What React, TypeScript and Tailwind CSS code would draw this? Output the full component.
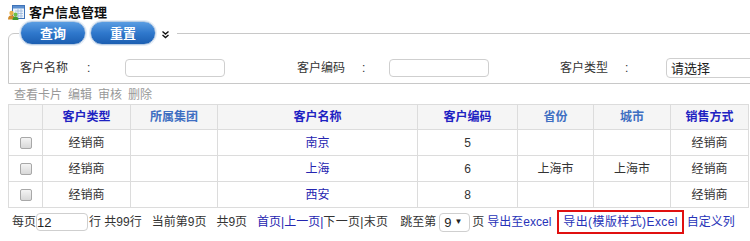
import React from 'react';

const font = { fontFamily: '"Microsoft YaHei", "Liberation Sans", "Noto Sans CJK SC", sans-serif' };

const columns = [
   { title: '客户类型', w: 'w-[88px]', dark: true },
   { title: '所属集团', w: 'w-[87px]', dark: false },
   { title: '客户名称', w: 'w-[200px]', dark: true },
   { title: '客户编码', w: 'w-[100px]', dark: true },
   { title: '省份', w: 'w-[76px]', dark: false },
   { title: '城市', w: 'w-[77px]', dark: false },
   { title: '销售方式', w: 'w-[78px]', dark: true },
];

const rows = [
   { type: '经销商', group: '', name: '南京', code: '5', prov: '', city: '', sale: '经销商' },
   { type: '经销商', group: '', name: '上海', code: '6', prov: '上海市', city: '上海市', sale: '经销商' },
   { type: '经销商', group: '', name: '西安', code: '8', prov: '', city: '', sale: '经销商' },
];

function TitleIcon() {
   return (
      <svg width="17" height="15" viewBox="0 0 17 15">
         <rect x="4.5" y="0.5" width="12" height="13" fill="#eef4fb" stroke="#3f73b8" />
         <rect x="5" y="1" width="11" height="2.5" fill="#5b8fd0" />
         <path d="M7 6h8M7 8.5h8M7 11h8M10 4v9M13 4v9" stroke="#9ab6dc" strokeWidth="0.8" />
         <circle cx="3.5" cy="8" r="2.2" fill="#e8b04a" />
         <path d="M0 14.5c0-3 1.5-4.2 3.5-4.2s3.5 1.2 3.5 4.2z" fill="#d08a2a" />
         <circle cx="7.5" cy="9.5" r="2" fill="#6fbf4a" />
         <path d="M4.5 15c0-2.6 1.3-3.6 3-3.6s3 1 3 3.6z" fill="#3f9a2e" />
      </svg>
   );
}

function PillButton({ label }: { label: string }) {
   return (
      <button className="h-[24px] w-[66px] rounded-full border border-[#b9cde4] bg-gradient-to-b from-[#5a9de2] via-[#2f78cc] to-[#1c5fb2] text-white text-[13px] font-bold leading-none shadow-[0_0_0_1px_#e6eef7]">
         {label}
      </button>
   );
}

function Checkbox() {
   return <span className="inline-block w-[12px] h-[12px] rounded-[2px] border border-[#a8a8a8] bg-gradient-to-b from-[#f4f4f4] to-[#d8d8d8] align-middle" />;
}

export default function App() {
   return (
      <div className="w-[750px] h-[241px] bg-white text-[12px] text-[#333] overflow-hidden" style={font}>
         <div className="flex items-center h-[22px] pl-[8px] pt-[3px] gap-[4px]">
            <TitleIcon />
            <span className="text-[13px] font-bold text-[#111] leading-none">客户信息管理</span>
         </div>

         <fieldset className="ml-[8px] mr-[-20px] border border-[#c8c8c8] rounded-tl-[6px] h-[63px] mt-[-1px]">
            <legend className="ml-[11px] flex items-center gap-[4px] px-0">
               <PillButton label="查询" />
               <PillButton label="重置" />
               <svg width="9" height="9" viewBox="0 0 9 9" className="mx-[1px] mt-[2px]">
                  <path d="M1.5 1.5L4.5 4L7.5 1.5M1.5 5L4.5 7.5L7.5 5" fill="none" stroke="#111" strokeWidth="1.4" />
               </svg>
               <span className="w-[2px]" />
            </legend>
            <div className="flex items-center h-[24px] mt-[11px] pl-[11px] leading-none">
               <span className="w-[67px]">客户名称</span>
               <span className="w-[38px]">:</span>
               <input className="w-[100px] h-[18px] border border-[#cfcfcf] rounded-[4px] outline-none" />
               <span className="ml-[72px] w-[65px]">客户编码</span>
               <span className="w-[27px]">:</span>
               <input className="w-[100px] h-[18px] border border-[#cfcfcf] rounded-[4px] outline-none" />
               <span className="ml-[71px] w-[65px]">客户类型</span>
               <span className="w-[41px]">:</span>
               <div className="w-[120px] h-[20px] border border-[#cfcfcf] rounded-[4px] flex items-center pl-[4px] text-[13px] text-[#222]">请选择</div>
            </div>
         </fieldset>

         <div className="flex gap-[6px] pl-[14px] h-[20px] pt-[1px] items-center text-[#999] leading-none">
            <span>查看卡片</span>
            <span>编辑</span>
            <span>审核</span>
            <span>删除</span>
         </div>

         <table className="ml-[8px] w-[740px] border-collapse table-fixed">
            <thead>
               <tr className="h-[25px] bg-[#f5f5f5]">
                  <th className="w-[34px] border border-[#dcdcdc]" />
                  {columns.map((c) => (
                     <th key={c.title} className={`${c.w} border border-[#dcdcdc] font-bold text-[12px] ${c.dark ? 'text-[#1e22c2]' : 'text-[#3f6fc2]'}`}>
                        {c.title}
                     </th>
                  ))}
               </tr>
            </thead>
            <tbody>
               {rows.map((r, i) => (
                  <tr key={i} className="h-[26px] text-center">
                     <td className="border border-[#dcdcdc]"><Checkbox /></td>
                     <td className="border border-[#dcdcdc]">{r.type}</td>
                     <td className="border border-[#dcdcdc]">{r.group}</td>
                     <td className="border border-[#dcdcdc] text-[#2525b0]">{r.name}</td>
                     <td className="border border-[#dcdcdc]">{r.code}</td>
                     <td className="border border-[#dcdcdc]">{r.prov}</td>
                     <td className="border border-[#dcdcdc]">{r.city}</td>
                     <td className="border border-[#dcdcdc]">{r.sale}</td>
                  </tr>
               ))}
            </tbody>
         </table>

         <div className="flex items-center h-[26px] mt-[1px] pl-[12px] leading-none whitespace-nowrap">
            <span>每页</span>
            <div className="w-[52px] h-[18px] border border-[#cfcfcf] rounded-[4px] flex items-center text-[13px] text-[#222]">12</div>
            <span className="ml-[1px]">行 共99行</span>
            <span className="ml-[10px]">当前第9页</span>
            <span className="ml-[10px]">共9页</span>
            <span className="ml-[10px] text-[#2525b0]">首页|上一页|</span>
            <span className="tracking-[0.3px]">下一页|末页</span>
            <span className="ml-[12px]">跳至第</span>
            <div className="ml-[3px] w-[31px] h-[19px] border border-[#cfcfcf] rounded-[4px] flex items-center pl-[4px] gap-[3px] text-[13px] text-[#222]">
               9<span className="text-[8px]">▼</span>
            </div>
            <span className="ml-[2px]">页</span>
            <span className="ml-[3px] text-[#2733b8]">导出至excel</span>
            <span className="ml-[6px] h-[24px] px-[4px] border-2 border-[#e01010] flex items-center text-[#2733b8] tracking-[0.4px]">导出(模版样式)Excel</span>
            <span className="ml-[3px] text-[#2733b8]">自定义列</span>
         </div>
      </div>
   );
}
